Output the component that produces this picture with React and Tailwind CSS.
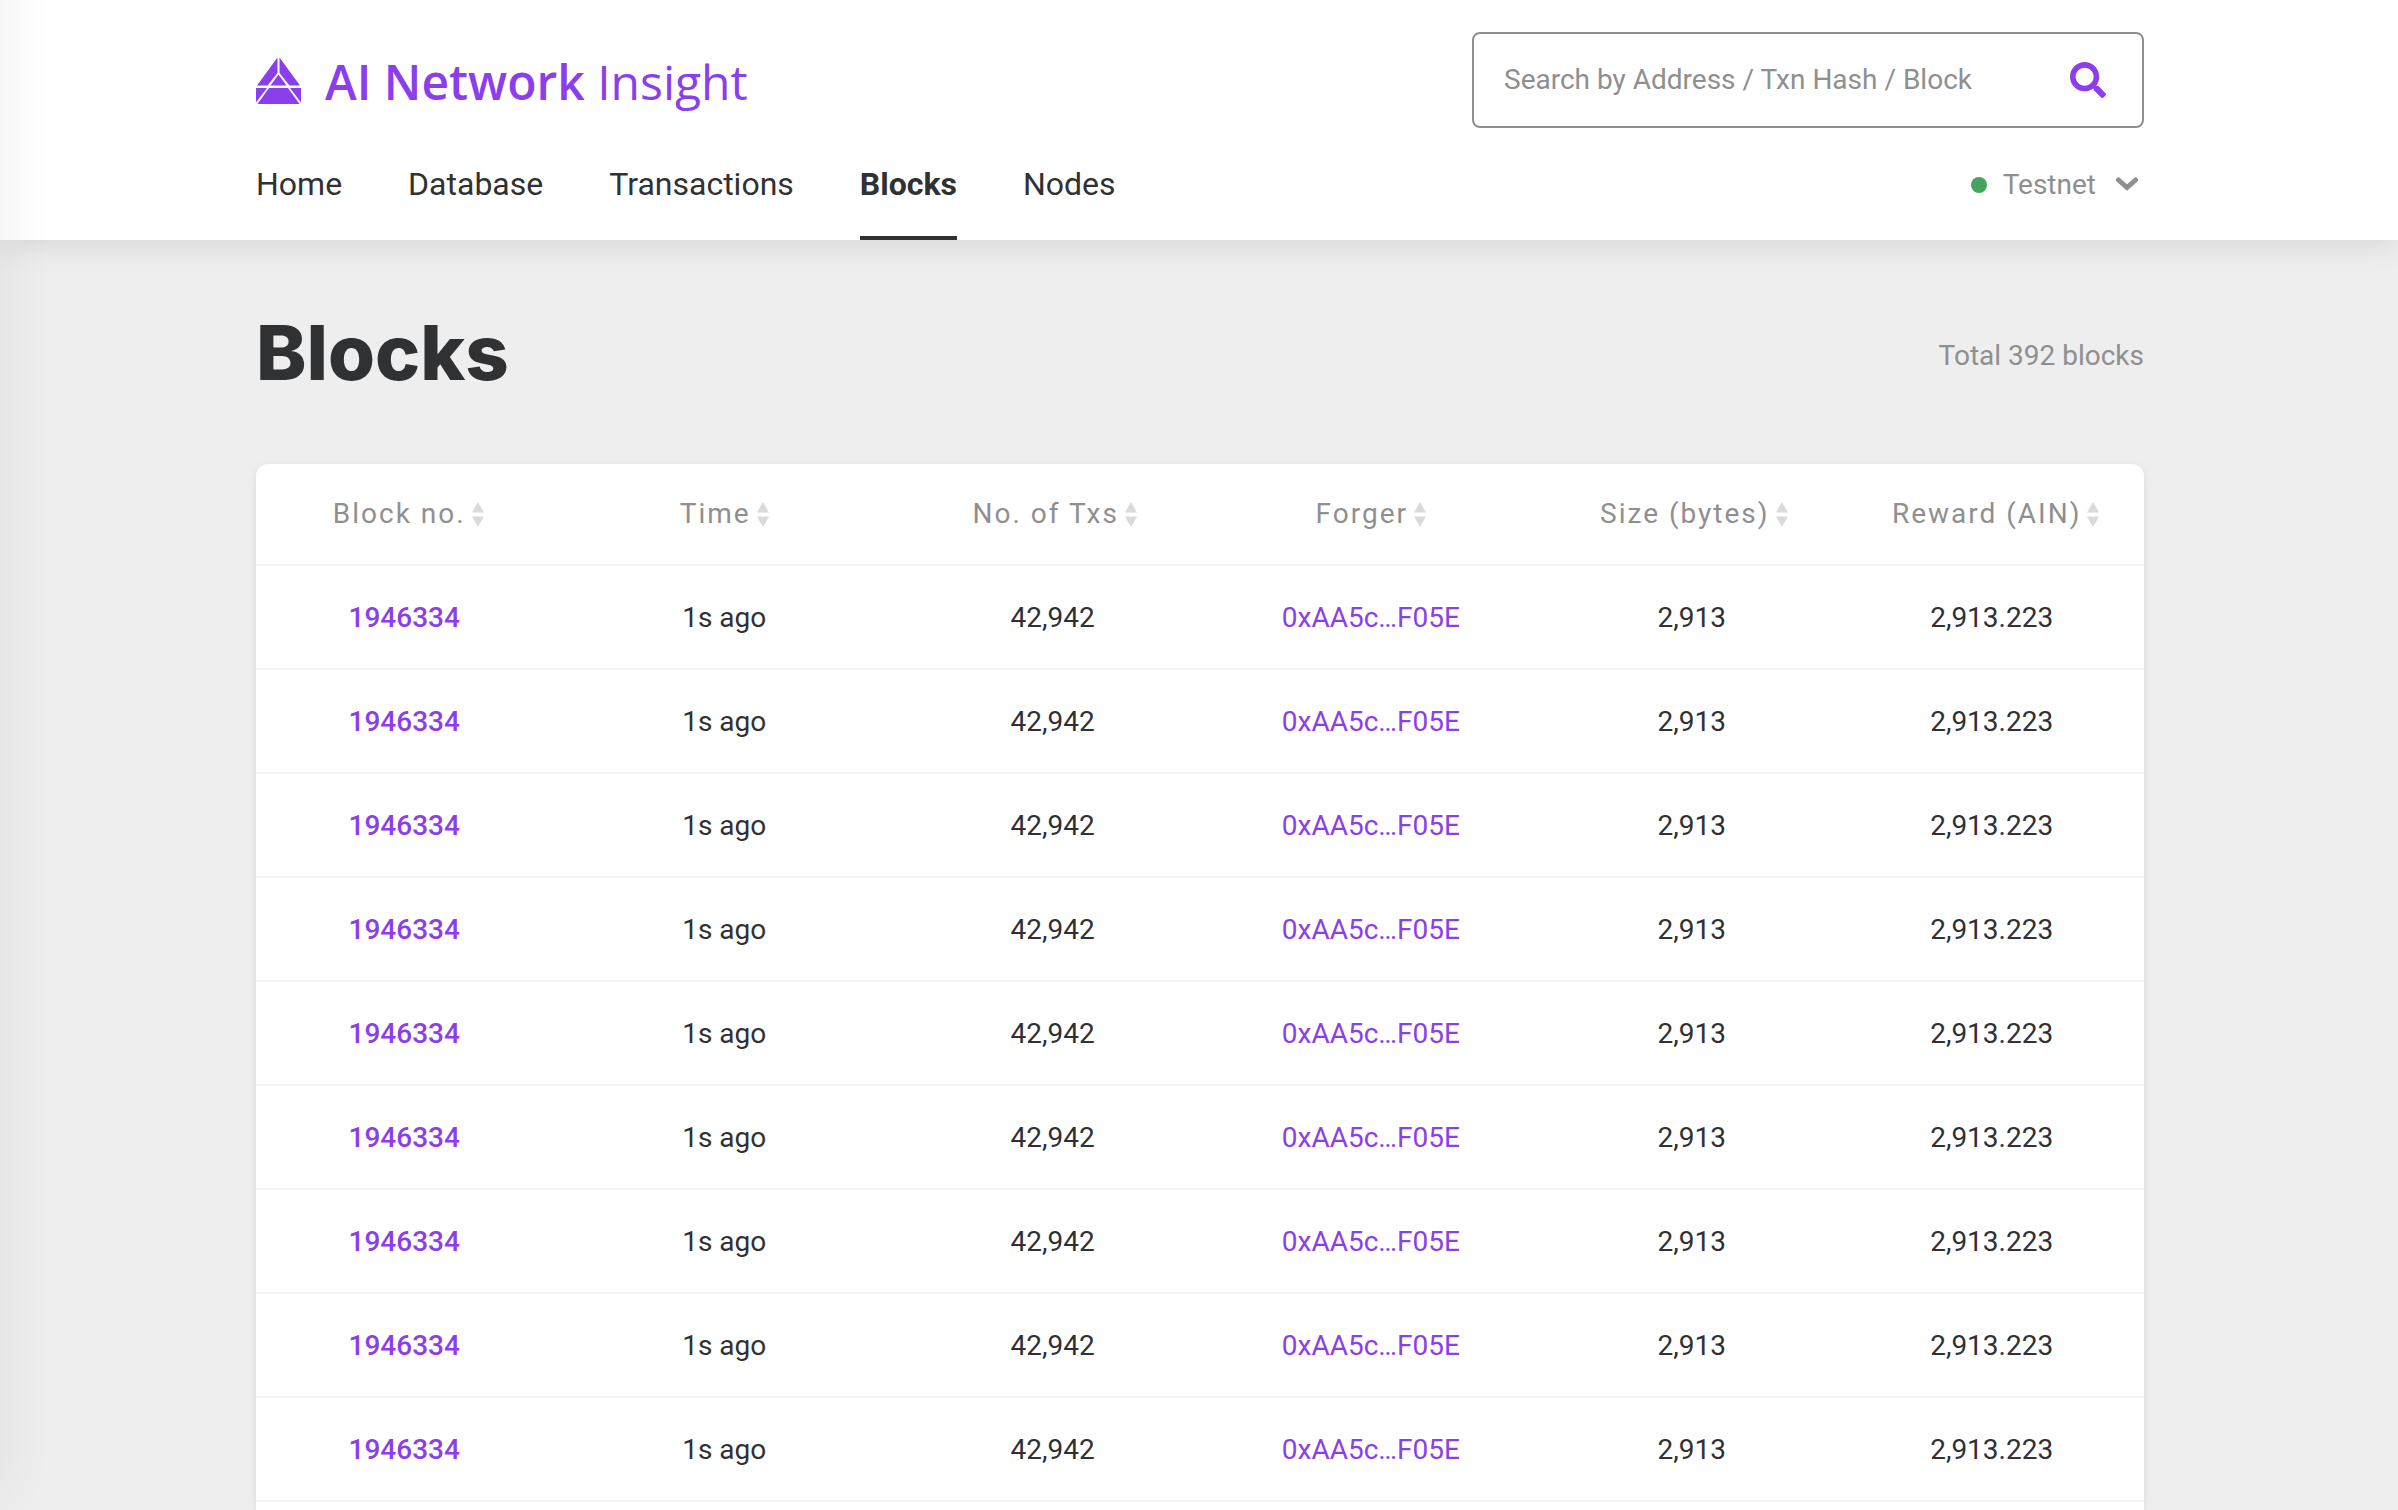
import { FaSearch } from "react-icons/fa";

const navItems = ["Home", "Database", "Transactions", "Blocks", "Nodes"];

const columns = [
  { label: "Block no.", width: "w-[15.7%]", pad: "pl-2" },
  { label: "Time", width: "w-[18.2%]", pad: "" },
  { label: "No. of Txs", width: "w-[16.6%]", pad: "pl-1" },
  { label: "Forger", width: "w-[17.1%]", pad: "" },
  { label: "Size (bytes)", width: "w-[16.9%]", pad: "pl-1" },
  { label: "Reward (AIN)", width: "w-[15.5%]", pad: "pr-1" },
];

const blocks = Array.from({ length: 9 }, () => ({
  number: "1946334",
  time: "1s ago",
  txs: "42,942",
  forger: "0xAA5c…F05E",
  size: "2,913",
  reward: "2,913.223",
}));

function Logo() {
  return (
    <svg viewBox="0 0 45 47" className="h-[47px] w-[45px]" aria-hidden="true">
      <g fill="#8b3eec">
        <path d="M21.5 0.5V16L11.5 28.5H1z" />
        <path d="M23.5 0.5V16L33.5 28.5H44z" />
        <path d="M22.5 17.5L30.5 28.5H14.5z" />
        <path d="M0 31H11L0 45.5z" />
        <path d="M45 31H34L45 45.5z" />
        <path d="M13 31H32L43.5 47H1.5z" />
      </g>
    </svg>
  );
}

function SortIcon() {
  return (
    <svg viewBox="0 0 12 25" className="h-[25px] w-3" fill="#dadada" aria-hidden="true">
      <path d="M6 0L12 10.5H0z" />
      <path d="M6 25L0 14.5H12z" />
    </svg>
  );
}

function Header() {
  return (
    <header className="relative bg-white pt-8 pr-[254px] pl-64 shadow-[0_4px_30px_rgba(0,0,0,0.1)]">
      <div className="flex h-24 items-center justify-between">
        <a href="#home" className="flex items-center gap-6 font-['Open_Sans'] text-5xl text-[#8b3eec]">
          <Logo />
          <span className="pt-1">
            <span className="font-semibold">AI Network</span> Insight
          </span>
        </a>
        <form className="flex h-24 w-[672px] items-center rounded-lg border-2 border-[#8f8f8f] pr-9 pl-[30px]">
          <input
            type="search"
            aria-label="Search by Address / Txn Hash / Block"
            placeholder="Search by Address / Txn Hash / Block"
            className="min-w-0 flex-1 text-[28px] outline-none placeholder:text-[#8f8f8f]"
          />
          <button type="button" aria-label="Search" className="text-[#8b3eec]">
            <FaSearch className="size-9" />
          </button>
        </form>
      </div>
      <div className="flex h-28 items-stretch justify-between">
        <nav className="flex gap-[66px] text-[32px] leading-[112px]">
          {navItems.map((item) => (
            <a
              key={item}
              href={"#" + item.toLowerCase()}
              className={item === "Blocks" ? "h-28 border-b-4 border-[#2f3133] font-bold" : "h-28"}
            >
              {item}
            </a>
          ))}
        </nav>
        <button type="button" className="flex items-center pt-0.5 pr-1.5 text-[28px] text-[#8f8f8f]">
          <span className="mr-4 size-4 rounded-full bg-[#43a45f]" />
          Testnet
          <svg viewBox="0 0 22 14" className="mb-0.5 ml-5 h-3.5 w-[22px]" fill="none" stroke="#8f8f8f" strokeWidth="5" strokeLinecap="round" aria-hidden="true">
            <path d="M2.5 3L11 10.5L19.5 3" />
          </svg>
        </button>
      </div>
    </header>
  );
}

function BlocksTable() {
  return (
    <table className="w-full table-fixed border-separate border-spacing-0 text-center text-[28px]">
      <thead>
        <tr className="h-[102px]">
          {columns.map((c) => (
            <th key={c.label} scope="col" className={c.width + " " + c.pad + " border-b-2 border-[#f2f2f2] font-normal"}>
              <button type="button" className="inline-flex items-center gap-1.5 tracking-[2px] whitespace-nowrap text-[#8f8f8f]">
                {c.label}
                <SortIcon />
              </button>
            </th>
          ))}
        </tr>
      </thead>
      <tbody className="[&_td]:border-b-2 [&_td]:border-[#f2f2f2] [&_td]:pt-0.5">
        {blocks.map((b, i) => (
          <tr key={i} className="h-[104px]">
            <td>
              <a href="#block" className="font-medium text-[#8b3eec]">{b.number}</a>
            </td>
            <td>{b.time}</td>
            <td>{b.txs}</td>
            <td>
              <a href="#forger" className="text-[#8b3eec]">{b.forger}</a>
            </td>
            <td>{b.size}</td>
            <td className="pr-3">{b.reward}</td>
          </tr>
        ))}
      </tbody>
    </table>
  );
}

export default function App() {
  return (
    <div className="relative flex min-h-screen flex-col bg-[#eeeeee] font-[Roboto,sans-serif] text-[#2f3133]">
      <Header />
      <main className="flex flex-1 flex-col pt-16 pr-[254px] pl-64">
        <div className="mb-16 flex h-24 items-center justify-between">
          <h1 className="font-[Inter] text-[76px] leading-24 font-extrabold">Blocks</h1>
          <p className="pt-2 text-[28px] text-[#8f8f8f]">Total 392 blocks</p>
        </div>
        <div className="flex-1 rounded-t-xl bg-white shadow-[0_2px_8px_rgba(0,0,0,0.08)]">
          <BlocksTable />
        </div>
      </main>
      <div className="pointer-events-none absolute -top-20 bottom-5 -left-40 w-40 shadow-[0_0_60px_rgba(0,0,0,0.07)]" />
    </div>
  );
}
